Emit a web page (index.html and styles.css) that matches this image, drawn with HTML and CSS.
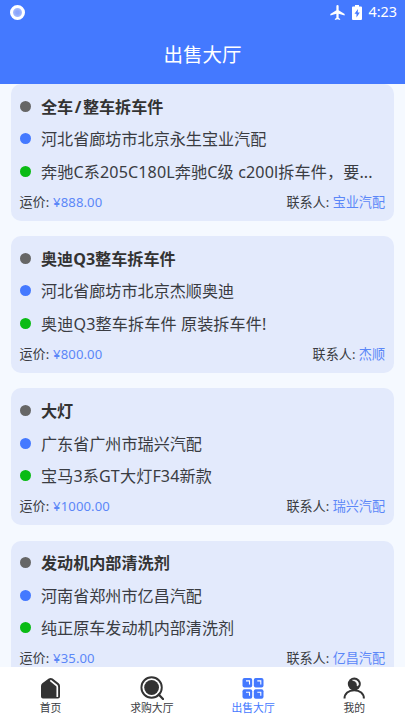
FILE: index.html
```
<!DOCTYPE html>
<html lang="zh-CN">
<head>
<meta charset="utf-8">
<title>出售大厅</title>
<link rel="stylesheet" href="styles.css">
</head>
<body>
<div class="app">
  <header class="header">
    <div class="status">
      <span class="ring"></span>
      <div class="status-right">
        <svg class="plane" viewBox="2 2 20 20"><path d="M21.500 16v-2l-8-5V3.500a1.500 1.500 0 0 0-3 0V9l-8 5v2l8-2.500V19l-2 1.500V22l3.500-1 3.500 1v-1.500l-2-1.500v-5.500z" fill="#fff"/></svg>
        <svg class="battery" viewBox="0 0 10 15"><path d="M3 0h4v1.500h2q1 0 1 1V14q0 1-1 1H1q-1 0-1-1V2.500q0-1 1-1h2z" fill="#fff"/><path d="M6 4 2.500 8.800h2V12.500L7.800 7.500H5.700z" fill="#4479ff"/></svg>
        <span class="clock">4:23</span>
      </div>
    </div>
    <h1 class="title">出售大厅</h1>
  </header>
  <main class="list">
    <article class="card">
      <div class="row name"><i class="dot"></i><span>全车<span class="slash">/</span>整车拆车件</span></div>
      <div class="row"><i class="dot blue"></i><span>河北省廊坊市北京永生宝业汽配</span></div>
      <div class="row mixed"><i class="dot green"></i><span>奔驰C系205C180L奔驰C级 c200l拆车件，要...</span></div>
      <div class="foot"><span>运价: <b class="price">¥888.00</b></span><span>联系人: <b>宝业汽配</b></span></div>
    </article>
    <article class="card">
      <div class="row name"><i class="dot"></i><span>奥迪Q3整车拆车件</span></div>
      <div class="row"><i class="dot blue"></i><span>河北省廊坊市北京杰顺奥迪</span></div>
      <div class="row mixed"><i class="dot green"></i><span>奥迪Q3整车拆车件 原装拆车件!</span></div>
      <div class="foot"><span>运价: <b class="price">¥800.00</b></span><span>联系人: <b>杰顺</b></span></div>
    </article>
    <article class="card">
      <div class="row name"><i class="dot"></i><span>大灯</span></div>
      <div class="row"><i class="dot blue"></i><span>广东省广州市瑞兴汽配</span></div>
      <div class="row mixed"><i class="dot green"></i><span>宝马3系GT大灯F34新款</span></div>
      <div class="foot"><span>运价: <b class="price">¥1000.00</b></span><span>联系人: <b>瑞兴汽配</b></span></div>
    </article>
    <article class="card">
      <div class="row name"><i class="dot"></i><span>发动机内部清洗剂</span></div>
      <div class="row"><i class="dot blue"></i><span>河南省郑州市亿昌汽配</span></div>
      <div class="row"><i class="dot green"></i><span>纯正原车发动机内部清洗剂</span></div>
      <div class="foot"><span>运价: <b class="price">¥35.00</b></span><span>联系人: <b>亿昌汽配</b></span></div>
    </article>
  </main>
  <nav class="tabs">
    <a class="tab">
      <svg viewBox="0 0 24 24"><path d="M9.800 2.600Q11.700 1.200 13.600 2.600L19.700 7.200Q21 8.300 21 10V20.500Q21 22.500 19 22.500H4Q2 22.500 2 20.500V10Q2 8.300 3.300 7.300z" fill="#333"/><path d="M11.300 4.300 17.700 9.500Q18.300 10 18.300 11V21" fill="none" stroke="#fff" stroke-width="1.700"/></svg>
      <span>首页</span>
    </a>
    <a class="tab">
      <svg viewBox="0 0 24 24"><circle cx="11.600" cy="11.500" r="10.200" fill="none" stroke="#333" stroke-width="1.900"/><circle cx="11.600" cy="11.500" r="7.400" fill="#333"/><path d="m18.700 18.500 4.300 4.600" stroke="#333" stroke-width="2.200" stroke-linecap="round"/></svg>
      <span>求购大厅</span>
    </a>
    <a class="tab active">
      <svg viewBox="0 0 24 24"><g fill="#4479ff"><rect x="1.500" y="2" width="9.700" height="9.500" rx="2"/><rect x="12.800" y="2" width="9.700" height="9.500" rx="2"/><rect x="1.500" y="13.300" width="9.700" height="9.500" rx="2"/><rect x="12.800" y="13.300" width="9.700" height="9.500" rx="2"/></g><path d="M5 4.900h3.500v3.500M16.300 4.900h3.500v3.500M5 16.200h3.500v3.500M16.300 16.200h3.500v3.500" fill="none" stroke="#fff" stroke-width="1.100"/></svg>
      <span>出售大厅</span>
    </a>
    <a class="tab">
      <svg viewBox="0 0 24 24"><circle cx="12.300" cy="8" r="6.500" fill="#333"/><path d="M10.500 4.200Q15.800 3.200 16.700 8.200 16.300 9.700 15.200 10 15.500 5.500 10.500 4.200z" fill="#fff" stroke="#fff" stroke-width=".6"/><path d="M2.500 22.500C2.500 17.500 6.500 14.200 12.200 14.200s9.700 3.300 9.700 8.300" fill="none" stroke="#333" stroke-width="2"/></svg>
      <span>我的</span>
    </a>
  </nav>
</div>
</body>
</html>
```
FILE: styles.css
```
* { box-sizing: border-box; }
body {
  margin: 0;
  font-family: "Noto Sans", "Noto Sans CJK SC", sans-serif;
  color: #3a3c42;
}
.app {
  display: flex;
  flex-direction: column;
  width: 405px;
  height: 720px;
  overflow: hidden;
  background: #f5f9ff;
}
.header {
  flex: none;
  height: 84px;
  background: #4479ff;
  color: #fff;
}
.status {
  display: flex;
  justify-content: space-between;
  align-items: center;
  height: 24px;
  padding: 0 8px 0 10px;
}
.ring {
  width: 15px;
  height: 15px;
  border: 3px solid #fff;
  border-radius: 50%;
  background: radial-gradient(#8ba5fb 25%, #b9ccff);
}
.status-right { display: flex; align-items: center; }
.plane { width: 15px; height: 15px; margin-right: 7px; }
.battery { width: 10px; height: 15px; margin-right: 6px; }
.clock { font-size: 14.400px; line-height: 24px; }
.title {
  margin: 0;
  padding-top: 1px;
  font-size: 19.500px;
  font-weight: 400;
  line-height: 60px;
  text-align: center;
}
.list {
  flex: 1;
  min-height: 0;
  overflow: hidden;
  display: flex;
  flex-direction: column;
  gap: 15.200px;
  padding: 0 11px;
}
.card {
  flex: none;
  height: 137px;
  padding: 6px 9px 0 8.500px;
  border-radius: 10px;
  background: #e3eafc;
}
.row {
  display: flex;
  align-items: center;
  height: 32.500px;
  font-size: 16.100px;
  line-height: 32px;
  white-space: nowrap;
}
.row > span { padding-top: 1px; }
.name { font-weight: 700; color: #333; }
.slash { margin: 0 1.500px; }
.mixed { letter-spacing: .13px; }
.dot {
  flex: none;
  width: 11px;
  height: 11px;
  margin-right: 10.500px;
  border-radius: 50%;
  background: #666;
}
.dot.blue { background: #4479ff; }
.dot.green { background: #0abb15; }
.foot {
  display: flex;
  justify-content: space-between;
  font-size: 13.100px;
  line-height: 28px;
}
.foot b { font-weight: 400; color: #5b87f8; }
.foot .price { margin-left: .5px; letter-spacing: .1px; }
.tabs {
  flex: none;
  display: flex;
  height: 53px;
  background: #fff;
}
.tab {
  flex: 1;
  display: flex;
  flex-direction: column;
  align-items: center;
  padding-top: 9px;
  font-size: 10.800px;
  line-height: 16px;
}
.tab svg { width: 24px; height: 24px; }
.tab.active { color: #4479ff; }
```
